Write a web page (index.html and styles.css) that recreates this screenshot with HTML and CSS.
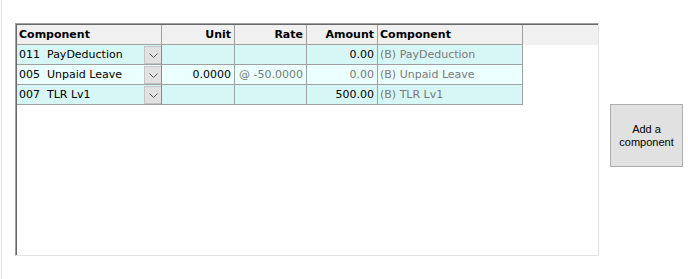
FILE: index.html
```html
<!DOCTYPE html>
<html>
<head>
<meta charset="utf-8">
<link rel="stylesheet" href="styles.css">
</head>
<body>
<div class="page">
  <div class="grid-panel">
    <div class="hdr">
      <div class="cell left">Component</div>
      <div class="cell right">Unit</div>
      <div class="cell right">Rate</div>
      <div class="cell right">Amount</div>
      <div class="cell left">Component</div>
    </div>
    <div class="row odd">
      <div class="cell combo"><span class="ctext">011&nbsp; PayDeduction</span><span class="dd"><svg width="9" height="5" viewBox="0 0 9 5"><path d="M0.5 0.5 L4.5 4.5 L8.5 0.5" fill="none" stroke="#5a5a5a" stroke-width="1"/></svg></span></div>
      <div class="cell right"></div>
      <div class="cell right"></div>
      <div class="cell right">0.00</div>
      <div class="cell left dim">(B) PayDeduction</div>
    </div>
    <div class="row even">
      <div class="cell combo"><span class="ctext">005&nbsp; Unpaid Leave</span><span class="dd"><svg width="9" height="5" viewBox="0 0 9 5"><path d="M0.5 0.5 L4.5 4.5 L8.5 0.5" fill="none" stroke="#5a5a5a" stroke-width="1"/></svg></span></div>
      <div class="cell right">0.0000</div>
      <div class="cell right dim">@ -50.0000</div>
      <div class="cell right dim">0.00</div>
      <div class="cell left dim">(B) Unpaid Leave</div>
    </div>
    <div class="row odd">
      <div class="cell combo"><span class="ctext">007&nbsp; TLR Lv1</span><span class="dd"><svg width="9" height="5" viewBox="0 0 9 5"><path d="M0.5 0.5 L4.5 4.5 L8.5 0.5" fill="none" stroke="#5a5a5a" stroke-width="1"/></svg></span></div>
      <div class="cell right"></div>
      <div class="cell right"></div>
      <div class="cell right">500.00</div>
      <div class="cell left dim">(B) TLR Lv1</div>
    </div>
  </div>
  <button class="add-btn">Add a<br>component</button>
</div>
</body>
</html>
```

FILE: styles.css
```css
html, body {
  margin: 0;
  padding: 0;
  background: #ffffff;
}
.page {
  margin-left: 1px;
  border-left: 1px solid #e3e3e3;
  height: 279px;
  box-sizing: border-box;
  display: flex;
  align-items: flex-start;
  font-family: "DejaVu Sans", sans-serif;
  font-size: 11px;
  color: #000;
}
.grid-panel {
  margin-left: 13px;
  margin-top: 23px;
  width: 584px;
  height: 233px;
  box-sizing: border-box;
  border-top: 1px solid #a0a0a0;
  border-left: 1px solid #a0a0a0;
  border-right: 1px solid #e3e3e3;
  border-bottom: 1px solid #e3e3e3;
  box-shadow: inset 1px 1px 0 #696969;
  padding: 1px 0 0 1px;
  background: #fff;
}
.hdr, .row {
  display: grid;
  grid-template-columns: 145px 73px 72px 71px 145px;
}
.hdr {
  background: #f0f0f0;
  font-weight: bold;
}
.row {
  width: 506px;
}
.cell {
  height: 20px;
  line-height: 19px;
  box-sizing: border-box;
  border-right: 1px solid #a0a0a0;
  border-bottom: 1px solid #a0a0a0;
  white-space: nowrap;
  overflow: hidden;
}
.left { padding-left: 2px; }
.right { text-align: right; padding-right: 3px; }
.odd .cell { background: #d7f6f6; }
.even .cell { background: #ebffff; }
.dim { color: #7a7a7a; }
.combo {
  display: flex;
  align-items: center;
  padding-left: 2px;
  border-right-color: #8a8a8a;
}
.ctext { flex: 1; overflow: hidden; }
.dd {
  flex: none;
  width: 17px;
  height: 18px;
  box-sizing: border-box;
  background: #e1e1e1;
  border: 1px solid #c4c4c4;
  border-right: 0;
  display: flex;
  align-items: center;
  justify-content: center;
  padding-top: 1px;
}
.add-btn {
  margin-left: 11px;
  margin-top: 104px;
  width: 73px;
  height: 63px;
  background: #e1e1e1;
  border: 1px solid #adadad;
  font-family: "Liberation Sans", Arial, sans-serif;
  font-size: 11px;
  line-height: 13px;
  color: #000;
  padding: 0;
}
```
